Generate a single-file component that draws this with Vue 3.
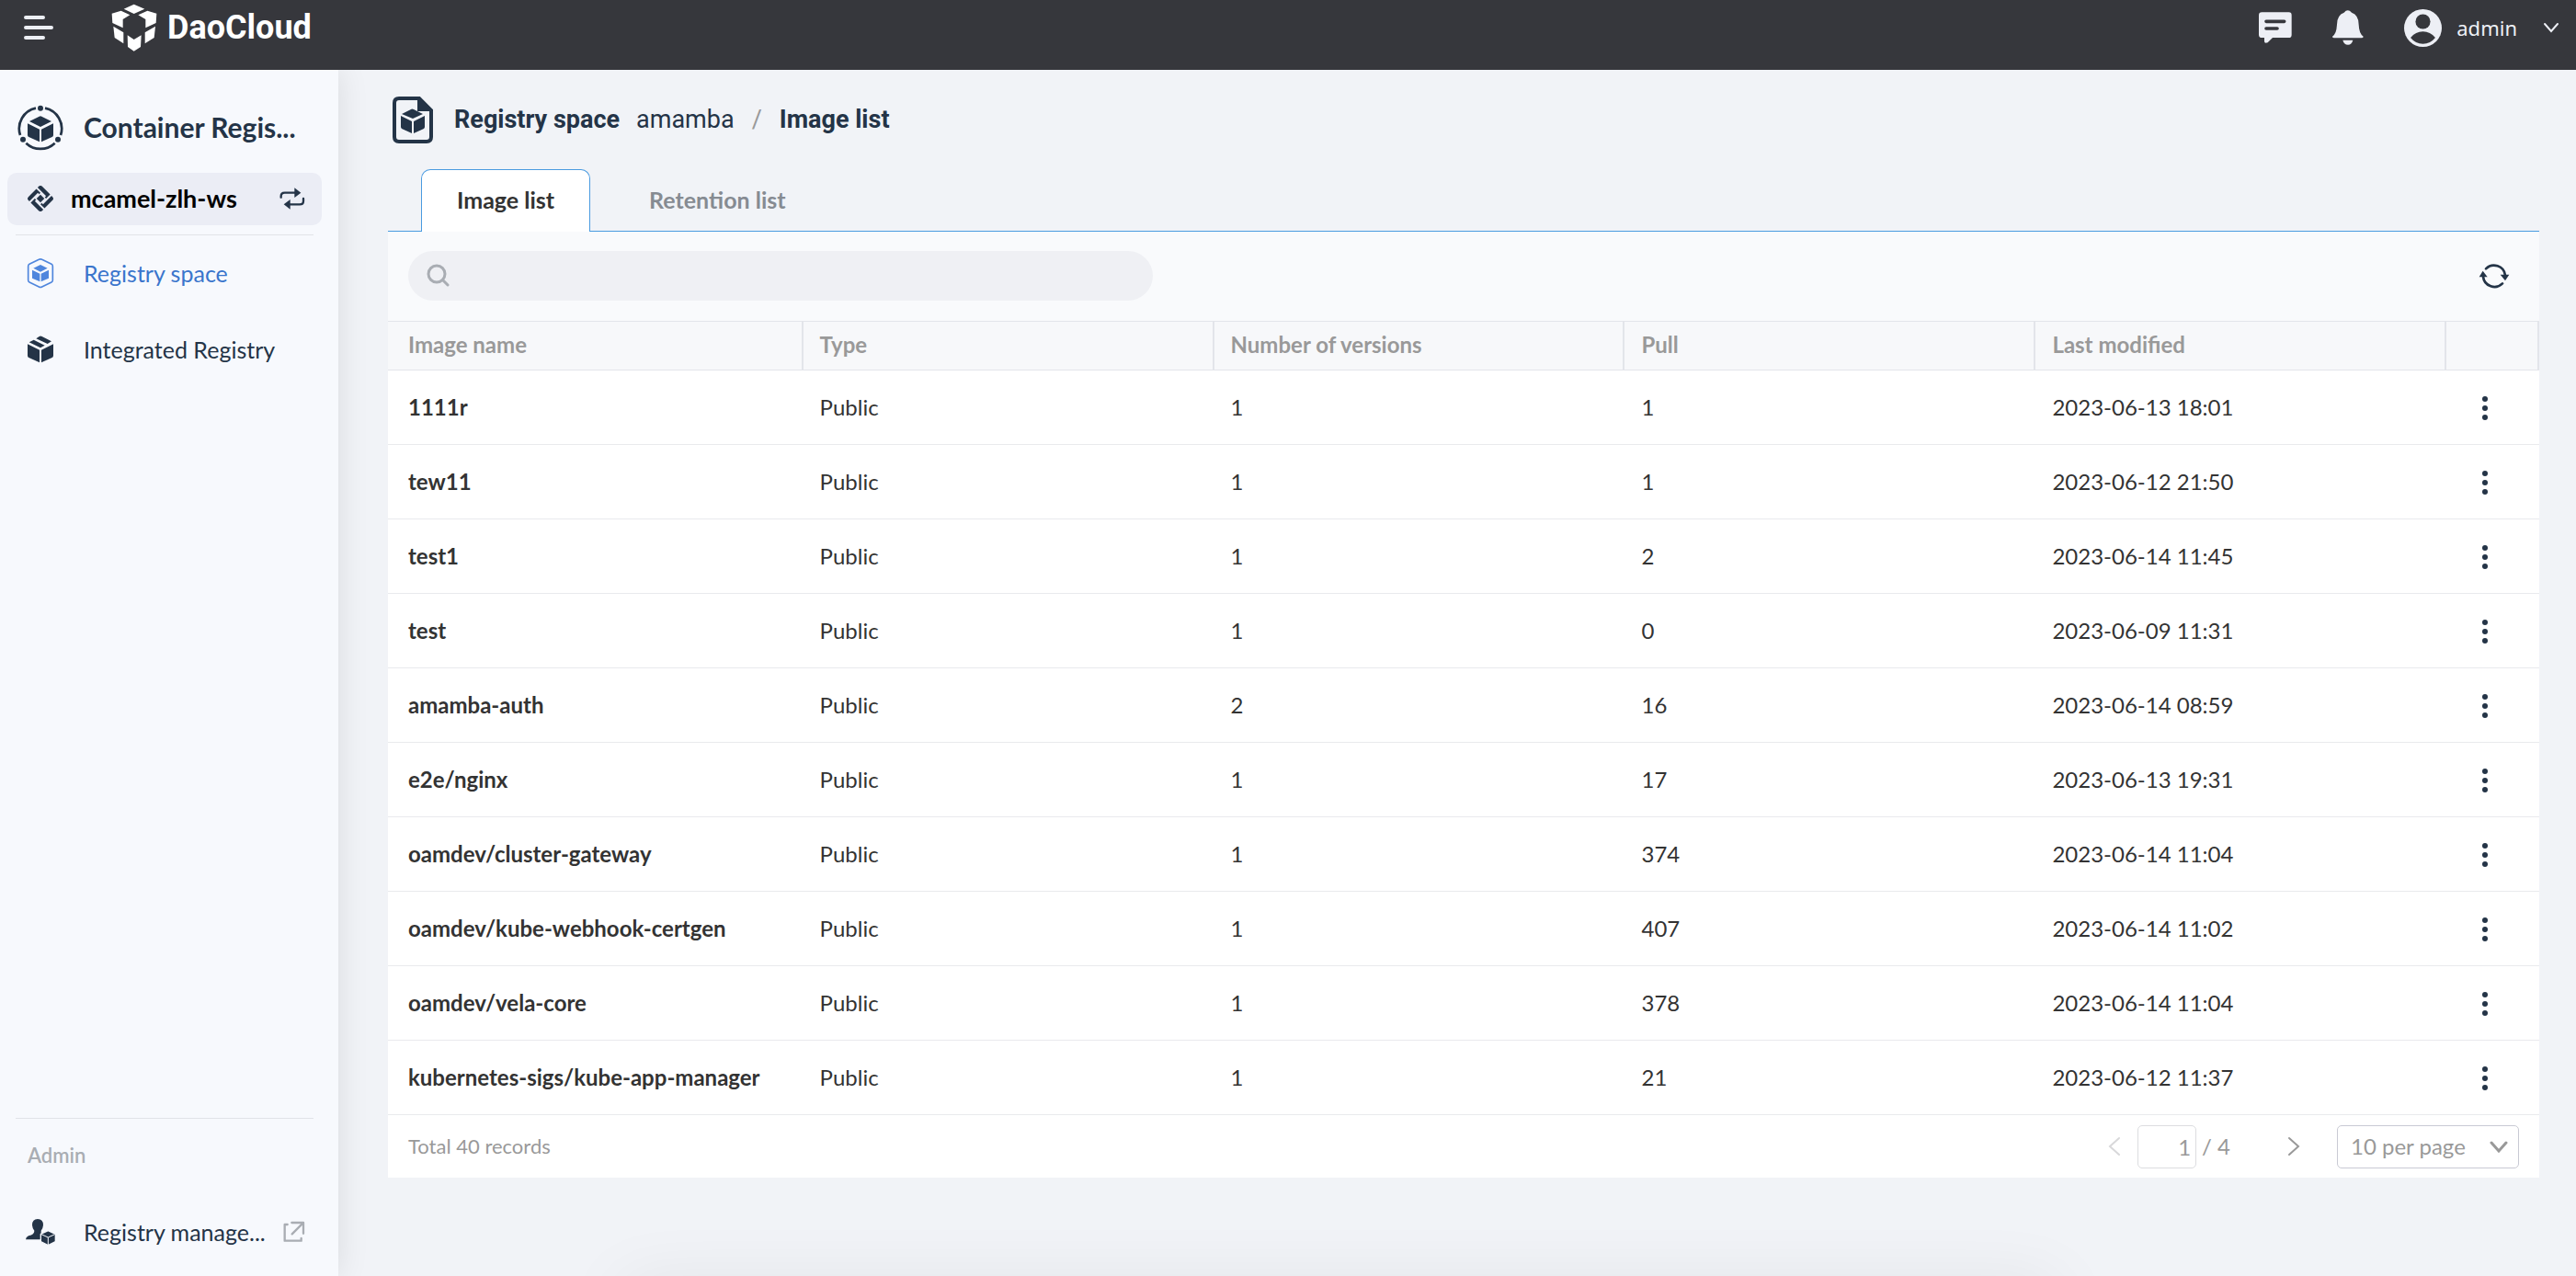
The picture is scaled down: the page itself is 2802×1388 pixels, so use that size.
<script setup>
import { ref } from 'vue'

const columns = ['Image name', 'Type', 'Number of versions', 'Pull', 'Last modified']
const images = [
  { name: '1111r', type: 'Public', versions: 1, pull: 1, modified: '2023-06-13 18:01' },
  { name: 'tew11', type: 'Public', versions: 1, pull: 1, modified: '2023-06-12 21:50' },
  { name: 'test1', type: 'Public', versions: 1, pull: 2, modified: '2023-06-14 11:45' },
  { name: 'test', type: 'Public', versions: 1, pull: 0, modified: '2023-06-09 11:31' },
  { name: 'amamba-auth', type: 'Public', versions: 2, pull: 16, modified: '2023-06-14 08:59' },
  { name: 'e2e/nginx', type: 'Public', versions: 1, pull: 17, modified: '2023-06-13 19:31' },
  { name: 'oamdev/cluster-gateway', type: 'Public', versions: 1, pull: 374, modified: '2023-06-14 11:04' },
  { name: 'oamdev/kube-webhook-certgen', type: 'Public', versions: 1, pull: 407, modified: '2023-06-14 11:02' },
  { name: 'oamdev/vela-core', type: 'Public', versions: 1, pull: 378, modified: '2023-06-14 11:04' },
  { name: 'kubernetes-sigs/kube-app-manager', type: 'Public', versions: 1, pull: 21, modified: '2023-06-12 11:37' },
]
const search = ref('')
const page = ref('1')
</script>

<template>
  <div class="app">
    <header class="topbar">
      <button class="icon-btn menu" aria-label="Menu">
        <svg width="34" height="28" viewBox="0 0 34 28" fill="none" stroke="#edeff5" stroke-width="4" stroke-linecap="round">
          <path d="M4 3H23M4 14H32M4 25H23" />
        </svg>
      </button>
      <a class="brand" href="#" aria-label="DaoCloud">
        <svg width="50" height="52" viewBox="364 13 150 156" fill="#fff">
          <path d="M405 30L438 15L473 30L438 46Z" />
          <path d="M366 45L396 36L425 50L402 64V92L368 76Z" />
          <path d="M512 45L482 36L452 50L476 64V92L510 76Z" />
          <path d="M371 87L404 107V143L375 124Z" />
          <path d="M508 87L474 107V143L504 124Z" />
          <path d="M417 116L438 130L462 116L460 154L438 168L418 154Z" />
        </svg>
        <span>DaoCloud</span>
      </a>
      <div class="top-actions">
        <button class="icon-btn" aria-label="Messages">
          <svg width="36" height="34" viewBox="174 47 108 102">
            <path fill="#edeff5" d="M184 48H272Q281 48 281 58V121Q281 131 272 131H219L203 147Q192 151 192 143V131H184Q174 131 174 121V58Q174 48 184 48Z" />
            <path stroke="#36373c" stroke-width="11" stroke-linecap="round" d="M198 78H257M198 101H234" />
          </svg>
        </button>
        <button class="icon-btn" aria-label="Notifications">
          <svg width="34" height="38" viewBox="415 36 102 114" fill="#edeff5">
            <path d="M415 122Q429 112 430 83Q430 52 453 44Q465 30 478 44Q501 52 501 83Q502 112 516 122Q516 127 510 127H421Q415 127 415 122Z" />
            <path d="M449 134H482Q478 149 466 149Q453 149 449 134Z" />
          </svg>
        </button>
        <button class="icon-btn user">
          <svg width="41" height="41" viewBox="647 29 122 122">
            <circle cx="708" cy="90" r="61" fill="#edeff5" />
            <circle cx="708" cy="69" r="24" fill="#36373c" />
            <path fill="#36373c" d="M668 121Q684 101 708 101Q732 101 748 121Q732 141 708 141Q684 141 668 121Z" />
          </svg>
          <span>admin</span>
          <svg width="18" height="12" viewBox="0 0 18 12" fill="none" stroke="#edeff5" stroke-width="2" stroke-linecap="round">
            <path d="M2 2L9 10L16 2" />
          </svg>
        </button>
      </div>
    </header>

    <div class="body">
      <nav class="sidebar">
        <div class="product">
          <svg width="50" height="50" viewBox="57 341 150 150" fill="#243447">
            <g fill="none" stroke="#243447" stroke-width="8">
              <path d="M147 352A68 68 0 0 1 198 440" />
              <path d="M117 352A68 68 0 0 0 66 440" />
              <path d="M85 466A68 68 0 0 0 179 466" />
            </g>
            <circle cx="132" cy="352" r="9" /><circle cx="75" cy="454" r="9" /><circle cx="189" cy="454" r="9" />
            <path d="M96 395L128 379Q132 377 136 379L168 395L132 413Z" />
            <path d="M90 402L129 421V462L94 446Q90 444 90 440Z" />
            <path d="M174 402L135 421V462L170 446Q174 444 174 440Z" />
          </svg>
          <h2>Container Regis...</h2>
        </div>
        <button class="workspace">
          <svg width="28" height="28" viewBox="-42 -42 84 84" fill="#243447">
            <g transform="rotate(45)">
              <rect x="-9" y="-9" width="18" height="18" />
              <path v-for="a in [0, 90, 180, 270]" :key="a" :transform="`rotate(${a})`" d="M-23 -32H13V-13H7V-19H-32V-23Q-32 -32 -23 -32Z" />
            </g>
          </svg>
          <span>mcamel-zlh-ws</span>
          <svg class="end" width="28" height="24" viewBox="911 610 84 72" fill="#243447">
            <g fill="none" stroke="#243447" stroke-width="7" stroke-linecap="round">
              <path d="M916 642V638Q916 627 928 627H962" />
              <path d="M989 646V654Q989 665 977 665H944" />
            </g>
            <path d="M960 611L981 627L960 643Z" /><path d="M946 649L925 665L946 681Z" />
          </svg>
        </button>
        <hr />
        <a class="item active" href="#">
          <svg width="32" height="34" viewBox="84 299 96 102" fill="#4f86dd">
            <path fill="none" stroke="#4f86dd" stroke-width="5" stroke-linejoin="round" d="M127 306Q132 303 137 306L168 321Q172 323 172 328V373Q172 378 168 380L137 395Q132 398 127 395L96 380Q92 378 92 373V328Q92 323 96 321Z" />
            <path d="M109 334L132 323L155 334L132 346Z" />
            <path d="M105 340L130 352V378L105 367Z" /><path d="M159 340L134 352V378L159 367Z" />
          </svg>
          <span>Registry space</span>
        </a>
        <a class="item" href="#">
          <svg width="32" height="32" viewBox="84 552 96 96" fill="#243447">
            <path d="M90 583L129 602V643L94 627Q90 625 90 620Z" />
            <path d="M174 583L135 602V643L170 627Q174 625 174 620Z" />
            <path d="M95 577L110 569L146 587L132 595Z" />
            <path d="M118 565L128 558Q132 555 137 558L168 574L155 582Z" />
          </svg>
          <span>Integrated Registry</span>
        </a>
        <div class="bottom">
          <hr />
          <p class="group">Admin</p>
          <a class="item" href="#">
            <svg width="32" height="30" viewBox="84 413 96 90" fill="#243447">
              <path d="M123 416Q141 416 141 436Q140 447 134 454V483H84Q84 475 93 471Q113 466 112 454Q106 447 105 436Q105 416 123 416Z" />
              <path stroke="#f7f9fd" stroke-width="4" d="M157 454L181 465V490L157 502L133 490V465Z" />
              <path fill="none" stroke="#f7f9fd" stroke-width="3" d="M135 466L157 476L179 466M157 476V502" />
            </svg>
            <span>Registry manage...</span>
            <svg class="end" width="24" height="24" viewBox="922 415 72 72" fill="none" stroke="#a9adb3" stroke-width="7" stroke-linecap="round" stroke-linejoin="round">
              <path d="M936 427H927V480H981V472M950 421H988V456M986 423L951 458" />
            </svg>
          </a>
        </div>
      </nav>

      <main>
        <div class="crumbs">
          <svg width="44" height="51" viewBox="0 0 44 51" fill="#243447">
            <path fill="none" stroke="#243447" stroke-width="4" d="M7 2H29L42 15V44Q42 49 37 49H7Q2 49 2 44V7Q2 2 7 2Z" />
            <path d="M27 1H30L43 14V16H27Z" />
            <path d="M10 19L20 14Q21 13 23 14L33 19L22 24Z" />
            <path d="M9 21L21 27V40L10 35Q9 34 9 33Z" /><path d="M35 21L23 27V40L34 35Q35 34 35 33Z" />
          </svg>
          <h1>Registry space</h1>
          <a href="#">amamba</a>
          <span class="slash">/</span>
          <strong>Image list</strong>
        </div>

        <div class="tabs" role="tablist">
          <button class="tab selected" role="tab" aria-selected="true">Image list</button>
          <button class="tab" role="tab" aria-selected="false">Retention list</button>
        </div>

        <section class="panel">
          <div class="toolbar">
            <label class="search">
              <svg width="25" height="25" viewBox="0 0 25 25" fill="none" stroke="#a9adb3" stroke-width="3" stroke-linecap="round">
                <circle cx="11" cy="11" r="9" /><path d="M18 18L23 23" />
              </svg>
              <input v-model="search" type="search" aria-label="Search images" />
            </label>
            <button class="icon-btn" aria-label="Refresh">
              <svg width="34" height="30" viewBox="20 44 102 90" fill="#243447">
                <g fill="none" stroke="#243447" stroke-width="8" stroke-linecap="round">
                  <path d="M44 66A37 37 0 0 1 107 87" /><path d="M98 114A37 37 0 0 1 35 92" />
                </g>
                <path d="M91 85H120L107 105Z" /><path d="M22 93H49L34 73Z" />
              </svg>
            </button>
          </div>

          <table>
            <colgroup>
              <col class="c-name" /><col class="c-data" /><col class="c-data" /><col class="c-data" /><col class="c-data" /><col />
            </colgroup>
            <thead>
              <tr>
                <th v-for="c in columns" :key="c" scope="col">{{ c }}</th>
                <th aria-label="Actions"></th>
              </tr>
            </thead>
            <tbody>
              <tr v-for="i in images" :key="i.name">
                <td class="name">{{ i.name }}</td>
                <td>{{ i.type }}</td>
                <td>{{ i.versions }}</td>
                <td>{{ i.pull }}</td>
                <td>{{ i.modified }}</td>
                <td class="actions">
                  <button class="icon-btn" aria-label="More actions">
                    <svg width="6" height="26" viewBox="0 0 6 26" fill="#243447">
                      <circle cx="3" cy="3" r="3" /><circle cx="3" cy="13" r="3" /><circle cx="3" cy="23" r="3" />
                    </svg>
                  </button>
                </td>
              </tr>
            </tbody>
          </table>

          <footer class="pager">
            <span class="total">Total 40 records</span>
            <button class="icon-btn" aria-label="Previous page" disabled>
              <svg width="14" height="22" viewBox="0 0 14 22" fill="none" stroke="#d8d8da" stroke-width="2" stroke-linecap="round"><path d="M12 2L2 11L12 20" /></svg>
            </button>
            <div class="pages">
              <input v-model="page" type="text" aria-label="Page" />
              <span>/ 4</span>
            </div>
            <button class="icon-btn next" aria-label="Next page">
              <svg width="14" height="22" viewBox="0 0 14 22" fill="none" stroke="#999" stroke-width="2" stroke-linecap="round"><path d="M2 2L12 11L2 20" /></svg>
            </button>
            <div class="size">
              <select aria-label="Records per page">
                <option>10 per page</option>
              </select>
              <svg width="20" height="13" viewBox="0 0 20 13" fill="none" stroke="#999" stroke-width="3" stroke-linecap="round"><path d="M2 2L10 11L18 2" /></svg>
            </div>
          </footer>
        </section>
      </main>
    </div>
    <div class="bottom-shade"></div>
  </div>
</template>

<style>
body { background: #f1f3f7; }
</style>

<style scoped>
* { box-sizing: border-box; }
.app {
  display: flex;
  flex-direction: column;
  min-height: 100vh;
  font-family: Lato, "Noto Sans", sans-serif;
  font-size: 24px;
  line-height: 32px;
  color: #333;
}
button, input, select { font: inherit; color: inherit; border: 0; background: none; padding: 0; margin: 0; }
a { color: inherit; text-decoration: none; }
h1, h2, p { margin: 0; }
svg { display: block; flex: none; }
.icon-btn { display: flex; align-items: center; }

.topbar {
  display: flex;
  align-items: center;
  height: 76px;
  padding: 0 18px 16px 24px;
  background: #36373c;
  color: #edeff5;
}
.brand { display: flex; align-items: center; gap: 11px; margin-left: 63px; color: #fff; font: 700 36px/44px Roboto, sans-serif; }
.top-actions { display: flex; align-items: center; gap: 44px; margin-left: auto; }
.user { font-family: "Noto Sans", sans-serif; font-size: 22px; }
.user span { margin: 0 28px 0 16px; }

.body { display: flex; flex: 1; }
.sidebar {
  display: flex;
  flex-direction: column;
  flex: none;
  width: 368px;
  padding-top: 14px;
  background: #f7f9fd;
  box-shadow: 0 0 32px rgba(0, 0, 0, 0.1);
  color: #243447;
  font-size: 25px;
  clip-path: inset(0 -48px 0 0);
}
.product { display: flex; align-items: center; gap: 22px; height: 98px; padding-left: 19px; }
.product h2 { padding-bottom: 2px; font-size: 30px; font-weight: 700; }
.workspace {
  display: flex;
  align-items: center;
  gap: 19px;
  height: 57px;
  margin: 0 18px 0 8px;
  padding: 0 18px 2px 22px;
  border-radius: 10px;
  background: #ebedf5;
  color: #000;
  font-size: 27px;
  font-weight: 700;
}
.end { margin-left: auto; }
hr { width: auto; height: 1px; margin: 10px 27px 0 17px; border: 0; background: #e1e3e8; }
.item { display: flex; align-items: center; height: 83px; padding: 0 36px 2px 28px; }
.item span { margin-left: 31px; }
.active { color: #3a75cc; }
.bottom { margin-top: auto; padding-bottom: 6px; }
.group { padding: 24px 30px 26px; font-size: 22px; font-weight: 600; color: #a9adb3; }

main { flex: 1; min-width: 0; padding: 0 40px 0 54px; }
.crumbs {
  display: flex;
  align-items: center;
  height: 108px;
  padding-left: 5px;
  font: 400 27px/32px Roboto, sans-serif;
  color: #243447;
}
.crumbs h1 { margin: 0 18px 0 23px; font-size: 27px; font-weight: 700; }
.crumbs strong { font-weight: 700; }
.slash { margin: 0 19px; color: #999; }

.tabs { display: flex; gap: 26px; height: 68px; padding-left: 36px; box-shadow: inset 0 -1px #4a9be0; }
.tab { padding: 0 38px 3px; font-size: 25px; font-weight: 700; color: #868b92; }
.selected {
  border: 1px solid #4a9be0;
  border-bottom: 0;
  border-radius: 10px 10px 0 0;
  background: #fff;
  color: #333;
}

.panel { background: #fff; }
.toolbar {
  display: flex;
  align-items: center;
  justify-content: space-between;
  height: 98px;
  padding: 0 32px 2px 22px;
  border-bottom: 1px solid #e3e5ea;
  background: #f9fafc;
}
.search {
  display: flex;
  align-items: center;
  gap: 12px;
  width: 810px;
  height: 54px;
  padding: 0 20px;
  border-radius: 27px;
  background: #eff0f4;
}
.search input { flex: 1; outline: 0; }

table { width: 100%; table-layout: fixed; border-collapse: separate; border-spacing: 0; }
.c-name { width: 19.3%; }
.c-data { width: 19.1%; }
th {
  height: 53px;
  padding: 0 18px 2px;
  border-right: 2px solid #e3e5ea;
  border-bottom: 1px solid #e3e5ea;
  background: #f7f8fa;
  color: #999;
  font-size: 24px;
  font-weight: 700;
  text-align: left;
}
td { height: 81px; padding: 0 18px; border-bottom: 1px solid #e9eaed; white-space: nowrap; }
th:first-child, td:first-child { padding-left: 22px; }
.name { font-weight: 700; }
.actions { padding: 2px 0 0 39px; }

.pager { display: flex; align-items: center; height: 68px; padding: 0 22px; color: #999; }
.total { margin-right: auto; font-size: 22px; }
.pages { display: flex; align-items: center; gap: 6px; margin-left: 18px; }
.pages input { width: 64px; height: 47px; padding: 0 5px; border: 1px solid #dcdde0; border-radius: 5px; background: #fff; text-align: right; }
.next { margin: 0 40px 0 62px; }
.size { position: relative; }
.size select { appearance: none; width: 198px; height: 47px; padding: 0 14px; border: 1px solid #c9cad4; border-radius: 5px; background: #fff; }
.size svg { position: absolute; right: 12px; top: 17px; pointer-events: none; }

.bottom-shade {
  position: fixed;
  left: 24%;
  right: 20%;
  bottom: -56px;
  height: 48px;
  border-radius: 24px;
  box-shadow: 0 0 72px rgba(20, 10, 30, 0.08);
  pointer-events: none;
}
</style>
